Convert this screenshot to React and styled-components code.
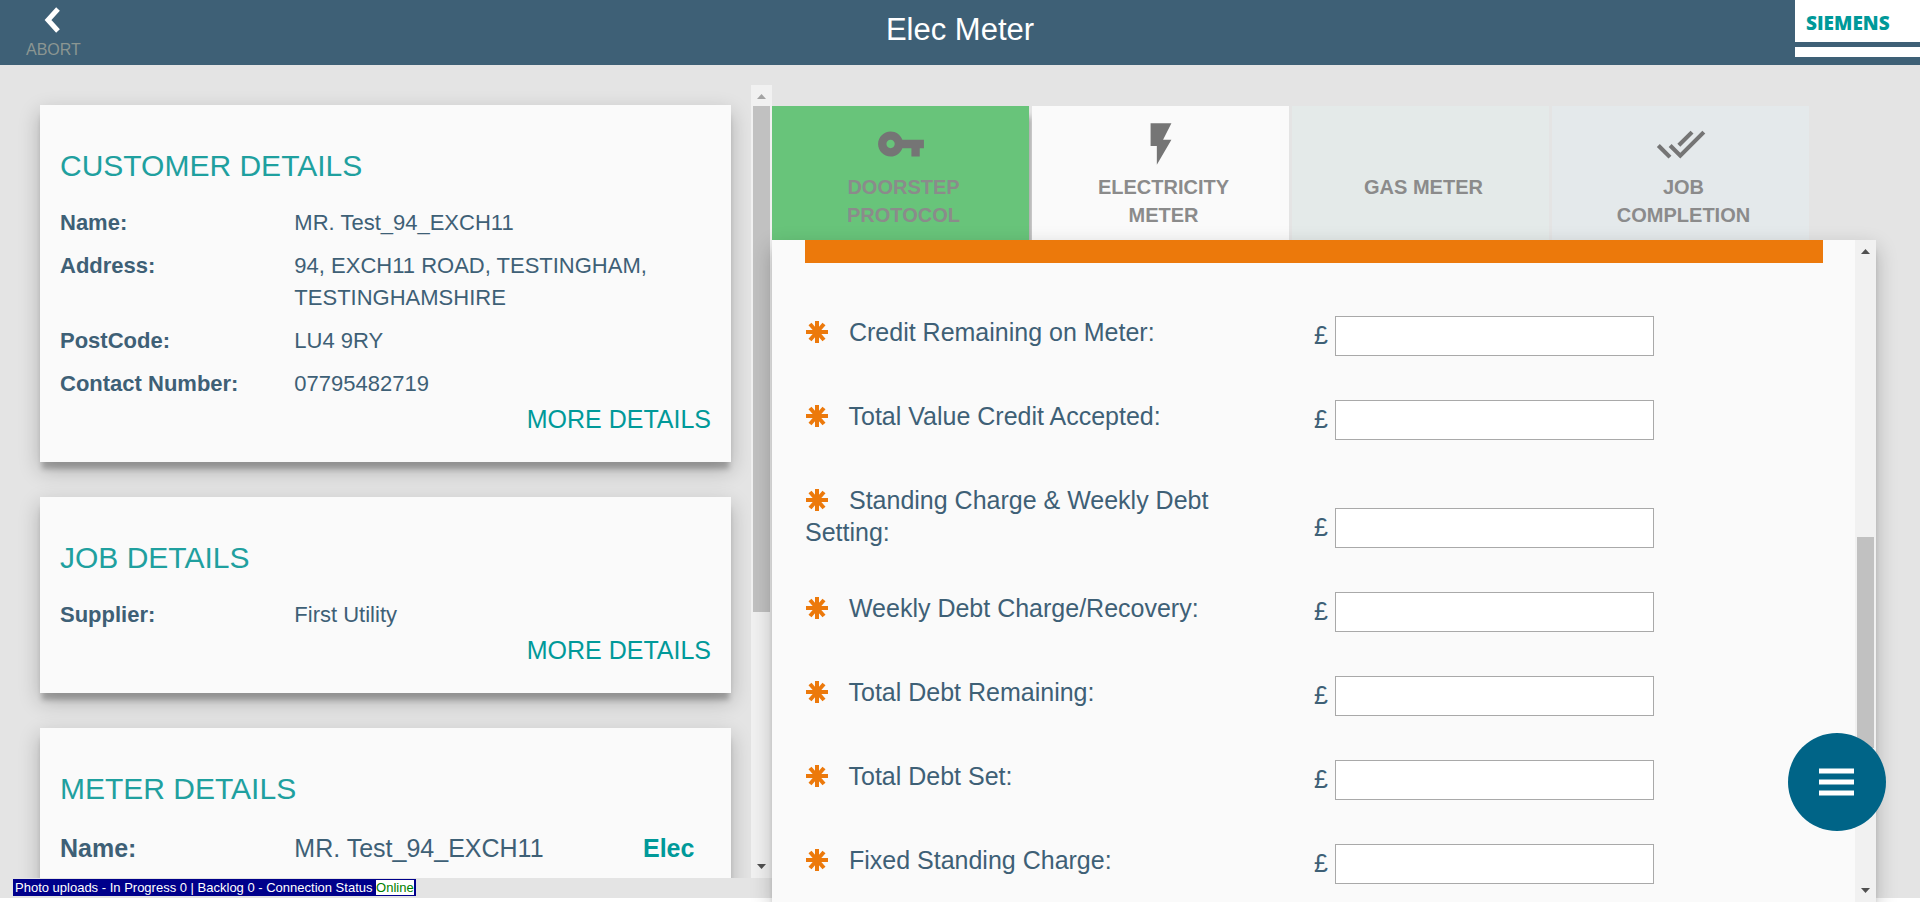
import React from 'react';
import styled, { createGlobalStyle } from 'styled-components';

const GlobalStyle = createGlobalStyle`
  *, *::before, *::after { box-sizing: border-box; }
  html, body { height: 100%; margin: 0; }
  body {
    background: #fff;
    color: #3e6076;
    font-family: "Liberation Sans", Arial, sans-serif;
    font-size: 22px;
    line-height: 32px;
    overflow: hidden;
  }
  #root { height: 100%; }
`;

const Page = styled.div`
  position: relative;
  height: 100%;
  display: flex;
  flex-direction: column;
  background: linear-gradient(#e4e4e4, #e4e4e4) 0 0 / 100% calc(100% - 4px) no-repeat;
`;

const Header = styled.header`
  flex: none;
  height: 65px;
  display: grid;
  grid-template-columns: 1fr auto 1fr;
  background: #3e6076;
`;

const AbortButton = styled.button`
  justify-self: start;
  align-self: start;
  display: flex;
  flex-direction: column;
  align-items: center;
  gap: 6px;
  margin: 6px 0 0 26px;
  padding: 0;
  border: 0;
  background: none;
  color: #8b9692;
  font: inherit;
  font-size: 16px;
  line-height: 20px;
`;

const Title = styled.h1`
  margin: 0;
  color: #fff;
  font-size: 31px;
  font-weight: 400;
  line-height: 60px;
`;

const Brand = styled.div`
  justify-self: end;
  align-self: start;
  width: 125px;
  height: 57px;
  background: linear-gradient(#3e6076, #3e6076) 0 42px / 100% 5px no-repeat #fff;
  color: #009999;
  padding: 12px 0 0 11px;
  font-family: "Open Sans", "Noto Sans", sans-serif;
  font-size: 19px;
  font-weight: 800;
  line-height: 23px;
`;

const Main = styled.main`
  flex: 1;
  min-height: 0;
  display: grid;
  grid-template-columns: 193fr 276fr;
  grid-template-rows: minmax(0, 1fr);
  padding-right: 44px;
`;

const SidePane = styled.section`
  min-width: 0;
  display: flex;
  margin: 20px 0 24px;
`;

const CardList = styled.div`
  flex: 1;
  min-width: 0;
  display: flex;
  flex-direction: column;
  gap: 35px;
  padding: 20px 20px 0 40px;
  overflow: hidden;
`;

const Card = styled.article`
  flex: none;
  padding: 41px 20px 27px;
  background: #fafafa;
  box-shadow: 0 9px 5px -2px rgba(0, 0, 0, 0.22), 0 8px 20px 0 rgba(0, 0, 0, 0.24);
`;

const CardTitle = styled.h2`
  margin: 0 0 21px;
  color: #1fa09f;
  font-size: 30px;
  font-weight: 400;
  line-height: 40px;
`;

const Details = styled.dl`
  display: grid;
  grid-template-columns: 36fr 64fr;
  row-gap: 11px;
  margin: 0 0 3px;
`;

const MeterDetails = styled(Details)`
  grid-template-columns: 36fr 51fr 13fr;
  font-size: 25px;
  line-height: 36px;
`;

const Term = styled.dt`
  font-weight: 700;
`;

const Value = styled.dd`
  margin: 0;
`;

const Fuel = styled(Value)`
  color: #009999;
  font-weight: 700;
  text-align: center;
`;

const MoreLink = styled.a`
  display: block;
  width: fit-content;
  margin-left: auto;
  color: #009999;
  font-size: 25px;
  text-decoration: none;
`;

const Track = styled.div`
  flex: none;
  width: 21px;
  display: flex;
  flex-direction: column;
  align-items: center;
  justify-content: space-between;
  padding: 9px 0;
  background: #f1f1f1;
`;

const ThumbArea = styled.div`
  flex: 1;
  width: 17px;
  margin: 7px 0;
  display: grid;
  grid-template-rows: ${p => p.$before}fr ${p => p.$size}fr ${p => p.$after}fr;
`;

const Thumb = styled.div`
  grid-row: 2;
  background: #c1c1c1;
`;

const WorkPane = styled.section`
  position: relative;
  z-index: 1;
  min-width: 0;
  display: flex;
  flex-direction: column;
  padding-top: 41px;
`;

const Tabs = styled.nav`
  flex: none;
  display: grid;
  grid-template-columns: repeat(4, 1fr);
  gap: 3px;
  height: 134px;
  margin-right: 67px;
`;

const Tab = styled.button`
  display: grid;
  grid-template-rows: 40px auto;
  justify-content: center;
  align-content: start;
  justify-items: center;
  align-items: center;
  gap: 9px;
  padding: 18px 48px 0;
  border: 0;
  background: ${p => p.$bg};
  box-shadow: ${p => (p.$raised ? '5px 8px 6px -3px rgba(0, 0, 0, 0.3)' : 'none')};
  color: #8b8b8b;
  font: inherit;
  font-size: 20px;
  font-weight: 700;
  line-height: 28px;
`;

const TabText = styled.span`
  grid-row: 2;
  padding-left: 6px;
`;

const Panel = styled.div`
  position: relative;
  flex: 1;
  min-height: 0;
  display: flex;
  background: #fafafa;
  box-shadow: 0 9px 5px -2px rgba(0, 0, 0, 0.22), 0 8px 20px 0 rgba(0, 0, 0, 0.24);
`;

const Form = styled.form`
  flex: 1;
  min-width: 0;
  display: flex;
  flex-direction: column;
  gap: 44px;
  padding: 0 32px 0 33px;
  overflow: hidden;
`;

const Banner = styled.div`
  flex: none;
  height: 23px;
  margin-bottom: 9px;
  background: #ec790b;
`;

const Field = styled.div`
  flex: none;
  display: grid;
  grid-template-columns: 1fr 1fr;
`;

const FieldLabel = styled.label`
  padding-right: 96px;
  font-size: 25px;
`;

const RequiredMark = styled.svg`
  margin: 0 14px 0 1px;
  vertical-align: -2px;
`;

const Amount = styled.div`
  align-self: end;
  display: flex;
  align-items: center;
  gap: 7px;
  font-size: 25px;
`;

const Currency = styled.span`
  padding-bottom: 2px;
`;

const AmountInput = styled.input`
  width: 319px;
  max-width: 80%;
  height: 40px;
  padding: 4px 8px;
  border: 1px solid #a9a9a9;
  border-radius: 0;
  background: #fff;
  color: inherit;
  font: inherit;
`;

const MenuButton = styled.button`
  position: absolute;
  z-index: 3;
  right: 34px;
  bottom: 71px;
  width: 98px;
  height: 98px;
  display: grid;
  place-items: center;
  padding: 0;
  border: 0;
  border-radius: 50%;
  background: #006487;
`;

const Status = styled.div`
  position: absolute;
  z-index: 2;
  left: 13px;
  bottom: 6px;
  padding: 1px 2px;
  background: #00008b;
  color: #fff;
  font-size: 13px;
  line-height: 15px;
`;

const Online = styled.span`
  background: #fff;
  color: #008000;
`;

function Scrollbar({ before, size, after, topEnd }) {
  return (
    <Track aria-hidden="true">
      <svg width="9" height="5"><path d="M0 5 4.500 0 9 5Z" fill={topEnd ? '#a3a3a3' : '#505050'} /></svg>
      <ThumbArea $before={before} $size={size} $after={after}><Thumb /></ThumbArea>
      <svg width="9" height="5"><path d="M0 0 4.500 5 9 0Z" fill="#505050" /></svg>
    </Track>
  );
}

const KeyIcon = () => (
  <svg width="50" height="50" viewBox="0 0 24 24" fill="#757575" aria-hidden="true">
    <path d="M12.650 10C11.830 7.670 9.610 6 7 6c-3.310 0-6 2.690-6 6s2.690 6 6 6c2.610 0 4.830-1.670 5.650-4H17v4h4v-4h2v-4H12.650zM7 14c-1.100 0-2-.9-2-2s.9-2 2-2 2 .9 2 2-.9 2-2 2z" />
  </svg>
);

const BoltIcon = () => (
  <svg width="50" height="50" viewBox="0 0 24 24" fill="#757575" aria-hidden="true">
    <path d="M7 2v11h3v9l7-12h-4l4-8z" />
  </svg>
);

const DoneAllIcon = () => (
  <svg width="50" height="50" viewBox="0 0 24 24" fill="#757575" aria-hidden="true">
    <path d="M18 7l-1.410-1.410-6.340 6.340 1.410 1.410L18 7zm4.240-1.410L11.660 16.170 7.480 12l-1.410 1.410L11.660 19l12-12-1.420-1.410zM.41 13.410L6 19l1.410-1.410L1.830 12 .41 13.410z" />
  </svg>
);

const tabs = [
  { name: 'DOORSTEP PROTOCOL', bg: '#68c47a', icon: <KeyIcon />, raised: true },
  { name: 'ELECTRICITY METER', bg: '#fafafa', icon: <BoltIcon /> },
  { name: 'GAS METER', bg: '#e4eae9' },
  { name: 'JOB COMPLETION', bg: '#e4e9eb', icon: <DoneAllIcon /> },
];

const fields = [
  'Credit Remaining on Meter:',
  'Total Value Credit Accepted:',
  'Standing Charge & Weekly Debt Setting:',
  'Weekly Debt Charge/Recovery:',
  'Total Debt Remaining:',
  'Total Debt Set:',
  'Fixed Standing Charge:',
];

const customer = [
  ['Name:', 'MR. Test_94_EXCH11'],
  ['Address:', '94, EXCH11 ROAD, TESTINGHAM, TESTINGHAMSHIRE'],
  ['PostCode:', 'LU4 9RY'],
  ['Contact Number:', '07795482719'],
];

function DetailRows({ rows }) {
  return (
    <Details>
      {rows.map(([term, value]) => (
        <React.Fragment key={term}>
          <Term>{term}</Term>
          <Value>{value}</Value>
        </React.Fragment>
      ))}
    </Details>
  );
}

function MoneyField({ label, id }) {
  return (
    <Field>
      <FieldLabel htmlFor={id}>
        <RequiredMark width="22" height="22" viewBox="-11 -11 22 22" aria-hidden="true">
          <path d="M0-11V11M-11 0H11M-7-8 7 8M-7 8 7-8" stroke="#ec790b" strokeWidth="4" />
        </RequiredMark>
        {' '}{label}
      </FieldLabel>
      <Amount>
        <Currency>£</Currency>
        <AmountInput id={id} type="text" inputMode="decimal" />
      </Amount>
    </Field>
  );
}

export default function App() {
  return (
    <Page>
      <GlobalStyle />
      <Header>
        <AbortButton type="button">
          <svg width="18" height="28" viewBox="0 0 18 28" aria-hidden="true">
            <path d="M14 3 4 14 14 25" fill="none" stroke="#fff" strokeWidth="5" />
          </svg>
          ABORT
        </AbortButton>
        <Title>Elec Meter</Title>
        <Brand>SIEMENS</Brand>
      </Header>
      <Main>
        <SidePane>
          <CardList>
            <Card>
              <CardTitle>CUSTOMER DETAILS</CardTitle>
              <DetailRows rows={customer} />
              <MoreLink href="#customer">MORE DETAILS</MoreLink>
            </Card>
            <Card>
              <CardTitle>JOB DETAILS</CardTitle>
              <DetailRows rows={[['Supplier:', 'First Utility']]} />
              <MoreLink href="#job">MORE DETAILS</MoreLink>
            </Card>
            <Card>
              <CardTitle>METER DETAILS</CardTitle>
              <MeterDetails>
                <Term>Name:</Term>
                <Value>MR. Test_94_EXCH11</Value>
                <Fuel>Elec</Fuel>
              </MeterDetails>
            </Card>
          </CardList>
          <Scrollbar before={0} size={506} after={245} topEnd />
        </SidePane>
        <WorkPane>
          <Tabs>
            {tabs.map(tab => (
              <Tab key={tab.name} type="button" $bg={tab.bg} $raised={tab.raised}>
                {tab.icon}
                <TabText>{tab.name}</TabText>
              </Tab>
            ))}
          </Tabs>
          <Panel>
            <Form>
              <Banner />
              {fields.map((label, i) => (
                <MoneyField key={label} label={label} id={`amount-${i}`} />
              ))}
            </Form>
            <Scrollbar before={276} size={211} after={133} />
          </Panel>
        </WorkPane>
      </Main>
      <MenuButton type="button" aria-label="Menu">
        <svg width="36" height="28" viewBox="0 0 36 28" aria-hidden="true">
          <path d="M0 3H35M0 14H35M0 25H35" stroke="#fff" strokeWidth="5" />
        </svg>
      </MenuButton>
      <Status>Photo uploads - In Progress 0 | Backlog 0 - Connection Status <Online>Online</Online></Status>
    </Page>
  );
}
